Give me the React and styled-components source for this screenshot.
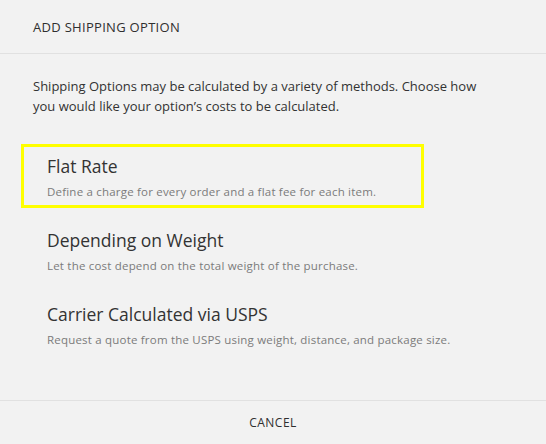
import React from 'react';
import styled, { createGlobalStyle } from 'styled-components';

const GlobalStyle = createGlobalStyle`
  html, body {
    margin: 0;
    padding: 0;
    background: #f2f2f2;
  }
  body {
    font-family: "Open Sans", "Liberation Sans", sans-serif;
    color: #333;
  }
`;

const options = [
  {
    title: 'Flat Rate',
    desc: 'Define a charge for every order and a flat fee for each item.',
    active: true,
  },
  {
    title: 'Depending on Weight',
    desc: 'Let the cost depend on the total weight of the purchase.',
  },
  {
    title: 'Carrier Calculated via USPS',
    desc: 'Request a quote from the USPS using weight, distance, and package size.',
  },
];

const App = () => (
  <Dialog>
    <GlobalStyle />
    <Header>ADD SHIPPING OPTION</Header>
    <Intro>
      Shipping Options may be calculated by a variety of methods. Choose how
      you would like your option’s costs to be calculated.
    </Intro>
    <OptionList>
      {options.map(option => (
        <Option key={option.title} active={option.active}>
          <OptionTitle>{option.title}</OptionTitle>
          <OptionDesc>{option.desc}</OptionDesc>
        </Option>
      ))}
    </OptionList>
    <Footer>
      <CancelButton>CANCEL</CancelButton>
    </Footer>
  </Dialog>
);

const Dialog = styled.div`
  display: flex;
  flex-direction: column;
  min-height: 100vh;
  box-sizing: border-box;
`;

const Header = styled.div`
  display: flex;
  align-items: center;
  height: 53px;
  padding: 0 33px;
  border-bottom: 1px solid #e1e1e1;
  font-size: 13px;
  font-weight: 500;
  letter-spacing: 0.3px;
  color: #2f2f2f;
`;

const Intro = styled.p`
  margin: 22px 33px 0;
  font-size: 13px;
  line-height: 20px;
  color: #333;
  max-width: 460px;
`;

const OptionList = styled.div`
  display: flex;
  flex-direction: column;
  gap: 10px;
  margin: 28px 0 0 21px;
`;

const Option = styled.div`
  width: 403px;
  box-sizing: border-box;
  padding: 8px 20px 5px 23px;
  border: 3px solid ${props => (props.active ? '#ffff00' : 'transparent')};
  cursor: pointer;
`;

const OptionTitle = styled.div`
  font-size: 17.5px;
  line-height: 22px;
  color: #333;
`;

const OptionDesc = styled.div`
  margin-top: 7px;
  font-size: 11.5px;
  line-height: 16px;
  color: #7b7b7b;
  letter-spacing: 0.2px;
  white-space: nowrap;
`;

const Footer = styled.div`
  margin-top: auto;
  display: flex;
  justify-content: center;
  align-items: center;
  height: 43px;
  border-top: 1px solid #e1e1e1;
`;

const CancelButton = styled.span`
  font-size: 12px;
  font-weight: 500;
  letter-spacing: 0.5px;
  color: #2f2f2f;
  cursor: pointer;
`;

export default App;
